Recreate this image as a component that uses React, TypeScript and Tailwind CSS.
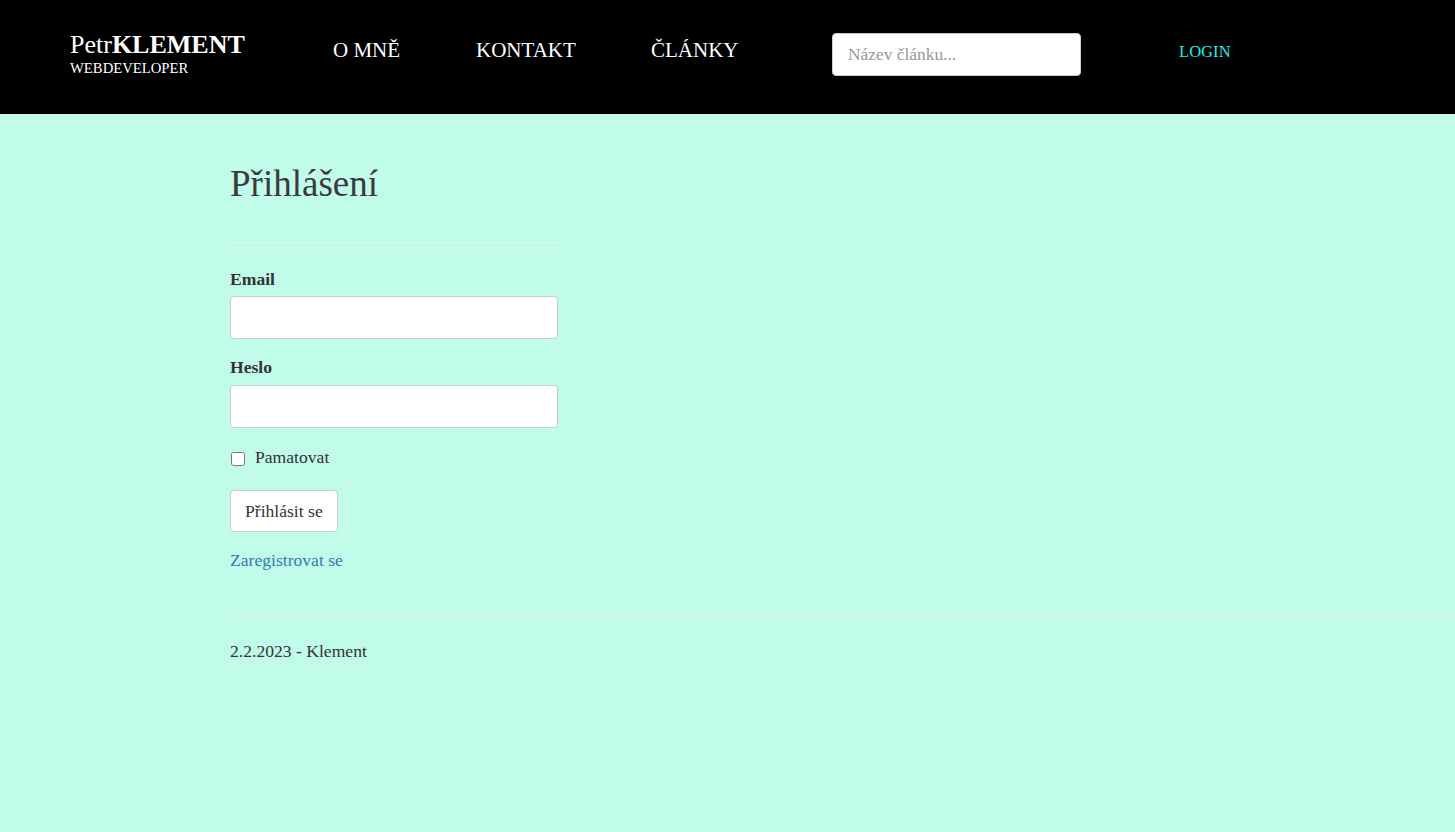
export default function App() {
    return (
        <div className="min-h-screen bg-[#c1fbe9] text-[#333333] font-['Liberation_Serif','Times_New_Roman',serif]">
            <header className="h-[114px] bg-black text-white flex items-center">
                <div className="pl-[70px] w-[333px] pb-[6px]">
                    <div className="text-[26px] leading-[28px]">
                        Petr<span className="font-bold">KLEMENT</span>
                    </div>
                    <div className="text-[14.7px] leading-[18px]">WEBDEVELOPER</div>
                </div>
                <nav className="flex items-center text-[21px] pb-[12px]">
                    <a className="w-[143px]">O MNĚ</a>
                    <a className="w-[175px]">KONTAKT</a>
                    <a className="w-[181px]">ČLÁNKY</a>
                </nav>
                <div className="pb-[6px]">
                    <input
                        placeholder="Název článku..."
                        className="w-[249px] h-[43px] bg-white rounded-[4px] border border-[#cccccc] px-[15px] text-[17.4px] text-[#555555] placeholder:text-[#999999] outline-none"
                    />
                </div>
                <a className="ml-[98px] pb-[10px] text-[16.6px] text-[#22eeee]">LOGIN</a>
            </header>

            <main className="pl-[230px] pt-[46px] text-[17.6px]">
                <div className="w-[328px]">
                    <h1 className="text-[37px] leading-[48px] text-[#3a3a3a]">Přihlášení</h1>
                    <hr className="mt-[34px] border-t border-white/40" />
                    <form className="pt-[25px]">
                        <label className="block font-bold leading-[22px] mb-[6px]">Email</label>
                        <input className="block w-[328px] h-[43px] bg-white rounded-[4px] border border-[#cccccc] outline-none" />
                        <label className="block font-bold leading-[22px] mt-[17px] mb-[7px]">Heslo</label>
                        <input type="password" className="block w-[328px] h-[43px] bg-white rounded-[4px] border border-[#cccccc] outline-none" />
                        <label className="flex items-center mt-[18px] leading-[22px]">
                            <input type="checkbox" className="w-[14px] h-[14px] ml-[1px] mr-[10px] mt-[3px]" />
                            Pamatovat
                        </label>
                        <button type="button" className="mt-[22px] h-[42px] px-[14px] bg-white rounded-[4px] border border-[#cccccc]">
                            Přihlásit se
                        </button>
                        <div className="mt-[16px] leading-[24px]">
                            <a className="text-[#337ab7]">Zaregistrovat se</a>
                        </div>
                    </form>
                </div>
                <hr className="mt-[42px] border-t border-[#eeeeee]" />
                <p className="mt-[24px] leading-[24px]">2.2.2023 - Klement</p>
            </main>
        </div>
    );
}
